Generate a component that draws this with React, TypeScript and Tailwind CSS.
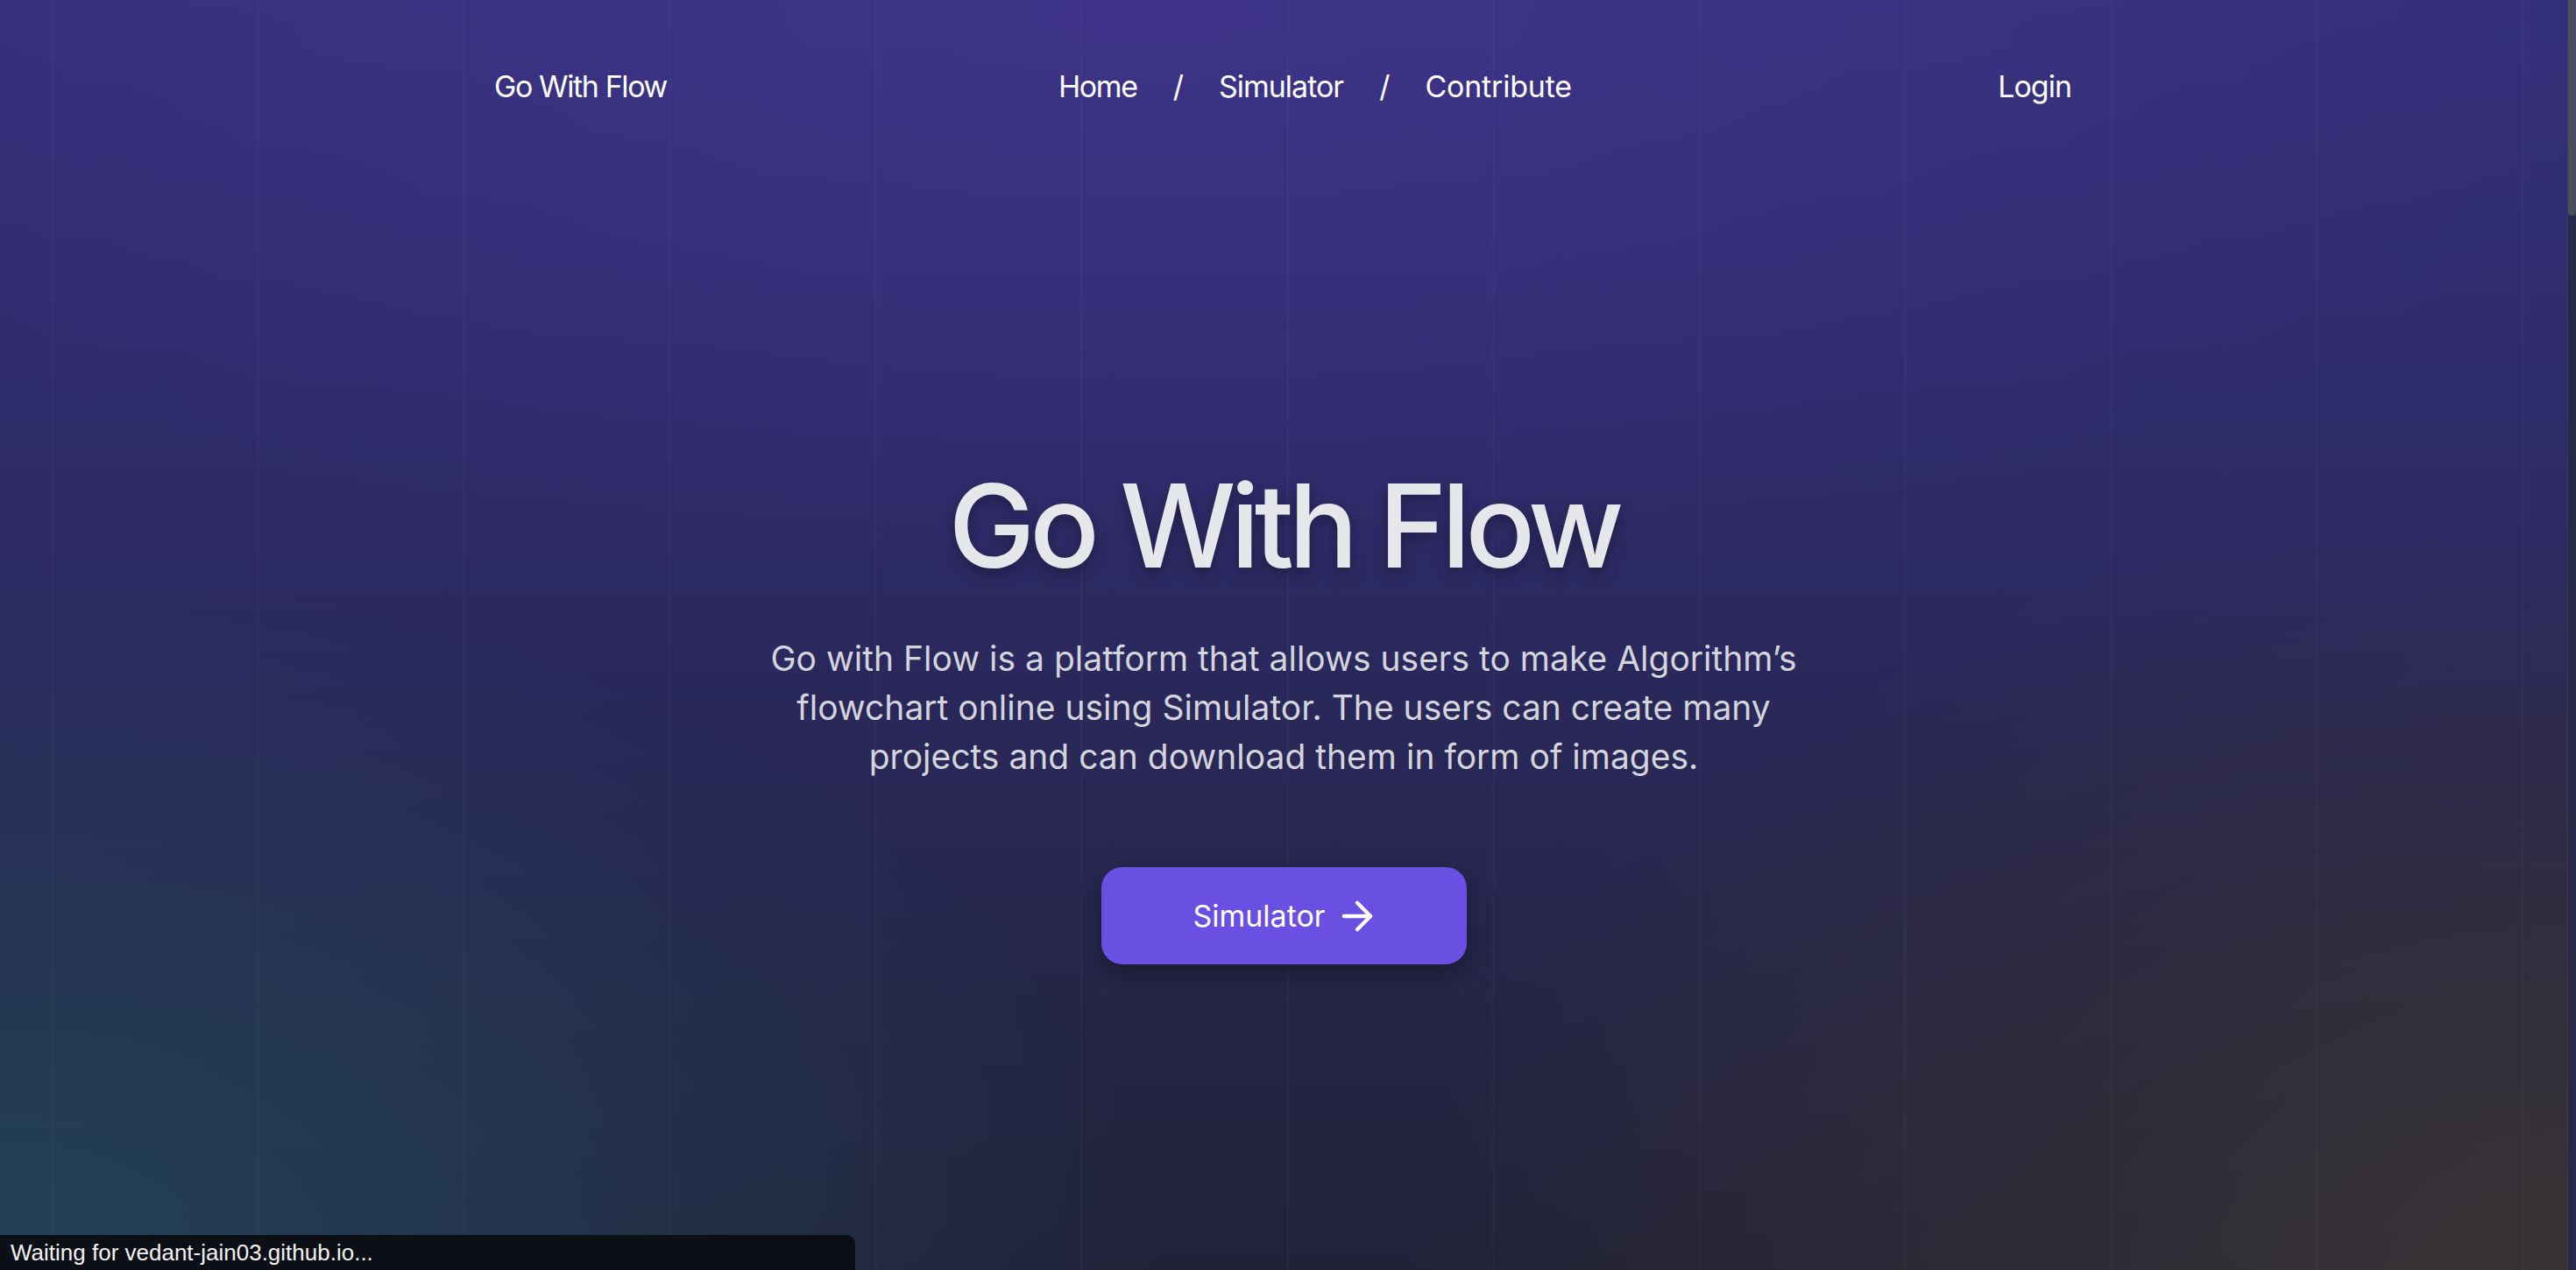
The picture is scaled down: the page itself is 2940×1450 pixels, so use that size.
import React from "react";
import { ArrowRight } from "lucide-react";

export default function App() {
  return (
    <div className="flex h-screen w-full overflow-hidden bg-[#262a47]">
      <div className="relative flex min-w-0 flex-1 flex-col bg-[repeating-linear-gradient(90deg,transparent_0px,transparent_58px,rgba(255,255,255,0.02)_58px,rgba(255,255,255,0.02)_61px,transparent_61px,transparent_235px),radial-gradient(ellipse_45%_55%_at_0%_100%,rgba(36,72,96,0.85),transparent),radial-gradient(ellipse_45%_60%_at_100%_100%,rgba(58,52,52,0.95),transparent),radial-gradient(ellipse_60%_45%_at_45%_0%,rgba(64,52,140,0.8),transparent),linear-gradient(180deg,#35307a_0%,#2d2a66_40%,#242546_80%,#212238_100%)] font-['Inter',sans-serif]">
        <nav className="flex h-[196px] items-center pl-[564px] pr-[566px] text-[34px] tracking-[-1px] text-white">
          <a className="whitespace-nowrap tracking-[-1.4px]">Go With Flow</a>
          <div className="ml-[447px] flex items-center gap-[41px]">
            <a className="tracking-[-1.4px]">Home</a>
            <span>/</span>
            <a>Simulator</a>
            <span>/</span>
            <a className="tracking-[-0.2px]">Contribute</a>
          </div>
          <a className="ml-auto">Login</a>
        </nav>
        <main className="flex flex-col items-center">
          <h1 className="mt-[338px] text-[132px] font-medium leading-none tracking-[-6px] text-[#e5e7eb] [text-shadow:0_6px_16px_rgba(0,0,0,0.3)]">
            Go With Flow
          </h1>
          <p className="mt-[58px] max-w-[1240px] text-center text-[39px] leading-[56px] tracking-[0px] text-[#d4d4dc]">
            Go with Flow is a platform that allows users to make Algorithm’s flowchart online using Simulator. The users can create many projects and can download them in form of images.
          </p>
          <button className="mt-[98px] flex h-[111px] w-[417px] items-center justify-center gap-[10px] rounded-[24px] bg-[#6950e3] pl-[6px] text-[34px] text-white shadow-[0_10px_24px_rgba(0,0,0,0.3)]">
            <span>Simulator</span>
            <ArrowRight size={52} strokeWidth={2} />
          </button>
        </main>
        <div className="absolute bottom-0 left-0 flex h-[40px] w-[976px] items-center rounded-tr-[10px] bg-[#0d0f17] pl-[12px] font-['Liberation_Sans',sans-serif] text-[26px] text-[#f2f2f2]">
          Waiting for vedant-jain03.github.io...
        </div>
      </div>
      <div className="flex w-[10px] flex-col border-l border-[#3a3f55] bg-[#262a47]">
        <div className="h-[246px] rounded-b-[4px] bg-[#4a4f5b]" />
      </div>
    </div>
  );
}
